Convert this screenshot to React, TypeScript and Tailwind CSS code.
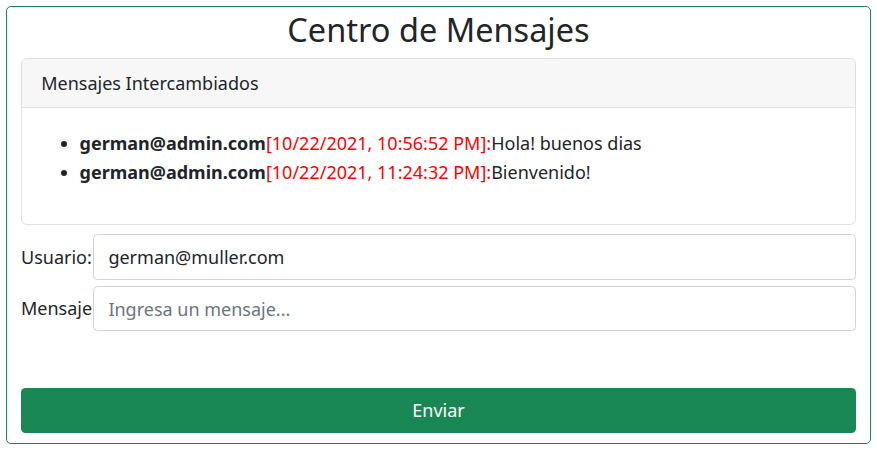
export default function App() {
  const mensajes = [
    { email: "german@admin.com", fecha: "[10/22/2021, 10:56:52 PM]:", texto: "Hola! buenos dias" },
    { email: "german@admin.com", fecha: "[10/22/2021, 11:24:32 PM]:", texto: "Bienvenido!" },
  ];

  return (
    <div className="p-[6px] bg-white text-[#212529] font-['Noto_Sans',sans-serif] text-[18px] leading-[28.8px]">
      <div className="border border-[#198754] rounded-[5px] px-[14px] pb-[10px]">
        <h2 className="text-center text-[32.5px] leading-[46px] font-normal mb-[5px]">
          Centro de Mensajes
        </h2>
        <div className="border border-[#dfdfdf] rounded-[6px]">
          <div className="bg-[#f7f7f7] border-b border-[#dfdfdf] px-[19.2px] py-[9.5px] rounded-t-[5px]">
            Mensajes Intercambiados
          </div>
          <div className="px-[19.2px] pt-[21px] pb-[19px]">
            <ul className="list-disc pl-[38.4px] mb-[19px]">
              {mensajes.map((m, i) => (
                <li key={i}>
                  <b className="font-bold">{m.email}</b>
                  <span className="text-[#ff0000]">{m.fecha}</span>
                  <span>{m.texto}</span>
                </li>
              ))}
            </ul>
          </div>
        </div>
        <div className="flex items-center mt-[9px]">
          <label className="w-[72px] shrink-0 whitespace-nowrap overflow-hidden">Usuario:</label>
          <div className="flex-1 h-[46px] flex items-center border border-[#ced4da] rounded-[4.5px] px-[14.4px]">
            german@muller.com
          </div>
        </div>
        <div className="flex items-center mt-[6px]">
          <label className="w-[72px] shrink-0 whitespace-nowrap overflow-hidden">Mensaje:</label>
          <input
            className="flex-1 h-[45px] border border-[#ced4da] rounded-[4.5px] px-[14.4px] outline-none placeholder:text-[#6c757d]"
            placeholder="Ingresa un mensaje..."
          />
        </div>
        <button className="w-full h-[45px] mt-[57px] bg-[#198754] text-white rounded-[4.5px]">
          Enviar
        </button>
      </div>
    </div>
  );
}
